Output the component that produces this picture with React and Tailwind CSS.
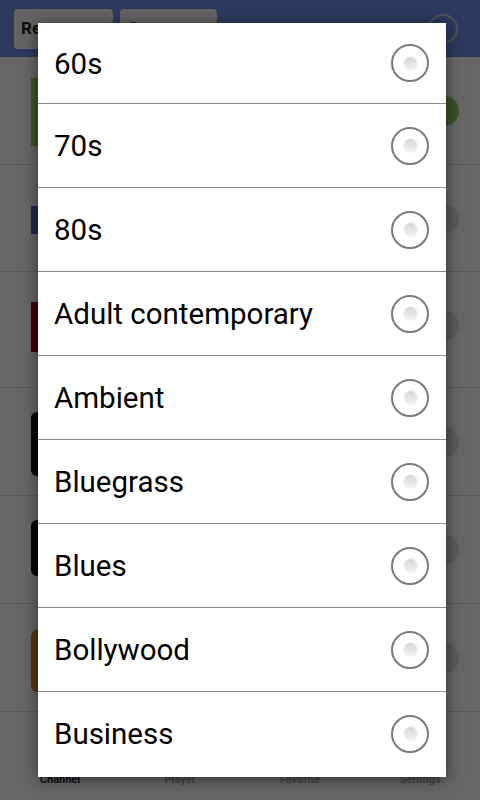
import React from 'react';

const genres = ['60s', '70s', '80s', 'Adult contemporary', 'Ambient', 'Bluegrass', 'Blues', 'Bollywood', 'Business'];

const stations = [
  { thumb: 'bg-[#9bd65a]', fav: true, row: 'h-[108px]', h: 'h-[68px]', top: 'mt-[21px]' },
  { thumb: 'bg-[#5a6ac8]', fav: false, row: 'h-[107px]', h: 'h-[28px]', top: 'mt-[41px]' },
  { thumb: 'bg-[#b00000]', fav: false, row: 'h-[116px]', h: 'h-[50px]', top: 'mt-[30px]' },
  { thumb: 'bg-[#111111] rounded-md', fav: false, row: 'h-[108px]', h: 'h-[64px]', top: 'mt-[24px]' },
  { thumb: 'bg-[#111111] rounded-md', fav: false, row: 'h-[108px]', h: 'h-[56px]', top: 'mt-[24px]' },
  { thumb: 'bg-[#e08a1e] rounded-md', fav: false, row: 'h-[108px]', h: 'h-[62px]', top: 'mt-[26px]' },
];

function Radio() {
  return (
    <div className="w-[38px] h-[38px] rounded-full border-2 border-[#7a7a7a] flex items-center justify-center shrink-0">
      <div className="w-[13px] h-[13px] rounded-full bg-gradient-to-b from-[#d6d6d6] to-[#f2f2f2] shadow-[0_0_2px_rgba(0,0,0,0.15)]" />
    </div>
  );
}

export default function App() {
  return (
    <div className="relative w-[480px] h-[800px] overflow-hidden bg-white font-['Roboto',sans-serif]">
      {/* Page behind the dialog */}
      <header className="h-[57px] bg-[#6e91ee] flex items-center px-[14px] gap-[7px]">
        <div className="w-[99px] h-[40px] rounded-[4px] bg-[#f7f7f7] text-[#222] font-bold text-[17px] flex items-center px-[7px]">Recent</div>
        <div className="w-[97px] h-[40px] rounded-[4px] bg-[#f7f7f7] text-[#222] font-bold text-[17px] flex items-center px-[7px]">Genre</div>
        <div className="ml-auto mr-[8px] w-[30px] h-[30px] rounded-full border-2 border-[#d0d0d0]" />
      </header>

      <div className="flex flex-col">
        {stations.map((s, i) => (
          <div key={i} className={`${s.row} border-b border-[#dcdcdc] flex items-start pl-[31px] pr-[21px]`}>
            <div className={`w-[80px] ${s.h} ${s.top} ${s.thumb}`} />
            <div
              className={`ml-auto mt-[39px] w-[30px] h-[30px] rounded-full ${
                s.fav ? 'bg-[#95cc62]' : 'bg-[#dedede]'
              }`}
            />
          </div>
        ))}
      </div>

      <nav className="absolute bottom-0 left-0 right-0 h-[40px] grid grid-cols-4 items-center text-[11px] font-bold">
        <span className="text-center text-[#333]">Channel</span>
        <span className="text-center text-[#aaa]">Player</span>
        <span className="text-center text-[#aaa]">Favorite</span>
        <span className="text-center text-[#aaa]">Settings</span>
      </nav>

      {/* Dim overlay */}
      <div className="absolute inset-0 bg-black/60" />

      {/* Genre picker dialog */}
      <div className="absolute left-[38px] top-[23px] w-[408px] h-[754px] bg-white shadow-[0_2px_14px_rgba(0,0,0,0.55)] overflow-hidden">
        {genres.map((g, i) => (
          <div
            key={g}
            className={`flex items-center justify-between pl-[16px] pr-[17px] ${
              i === 0 ? 'h-[80px]' : 'h-[84px] border-t border-[#8a8a8a]'
            }`}
          >
            <span className="text-[29.5px] text-black leading-none pt-[3px]">{g}</span>
            <Radio />
          </div>
        ))}
      </div>
    </div>
  );
}
